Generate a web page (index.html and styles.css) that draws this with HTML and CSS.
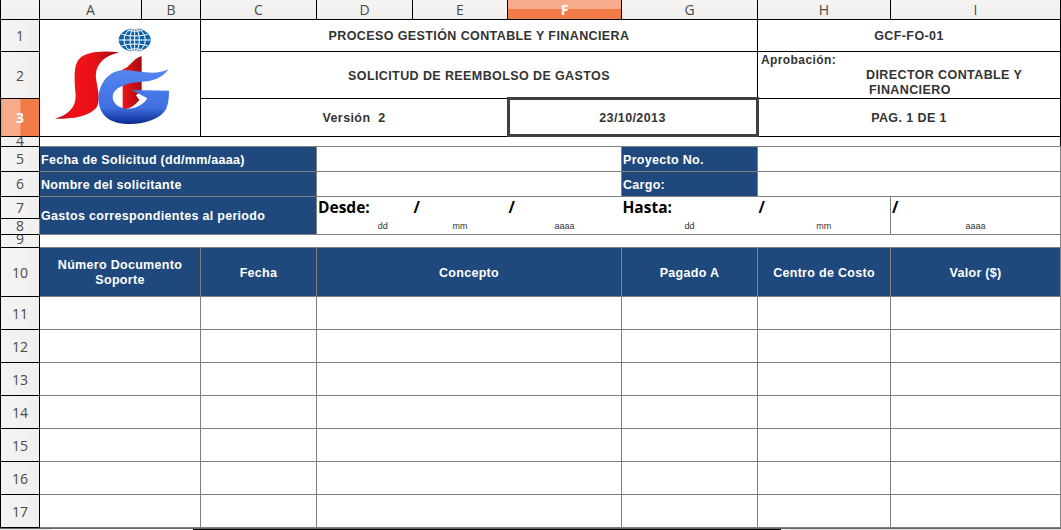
FILE: index.html
```html
<!DOCTYPE html>
<html lang="es">
<head>
    <title>Solicitud de reembolso de gastos</title>
    <link rel="stylesheet" href="styles.css">
</head>
<body>
<table class="sheet">
    <colgroup>
        <col class="c-head"><col class="c-a"><col class="c-b"><col class="c-c"><col class="c-d">
        <col class="c-e"><col class="c-f"><col class="c-g"><col class="c-h"><col class="c-i">
    </colgroup>
    <tr class="r-cols">
        <th class="corner"></th><th>A</th><th>B</th><th>C</th><th>D</th><th>E</th><th class="col-active">F</th><th>G</th><th>H</th><th>I</th>
    </tr>
    <tr class="r1 top">
        <th>1</th>
        <td colspan="2" rowspan="3" class="logo">
            <svg viewBox="0 0 480 345" width="160" height="115">
                <defs>
                    <linearGradient id="red" x1="0" y1="0" x2="1" y2="0">
                        <stop offset="0" stop-color="#b00c10"/>
                        <stop offset="0.3" stop-color="#f01319"/>
                        <stop offset="0.6" stop-color="#e81117"/>
                        <stop offset="1" stop-color="#9a0b0f"/>
                    </linearGradient>
                    <linearGradient id="red-bar" x1="0" y1="0" x2="1" y2="0">
                        <stop offset="0" stop-color="#ee1419"/>
                        <stop offset="1" stop-color="#a50c10"/>
                    </linearGradient>
                    <linearGradient id="blue" x1="0" y1="0" x2="0" y2="1">
                        <stop offset="0" stop-color="#5686ee"/>
                        <stop offset="0.7" stop-color="#3f6fe2"/>
                        <stop offset="1" stop-color="#0b2a8f"/>
                    </linearGradient>
                </defs>
                <path fill="url(#red)" d="M238 97C180 90 125 96 112 125C100 145 104 190 107 225C108 262 85 285 45 296C100 298 155 288 172 258C182 235 172 205 168 175C165 140 185 110 238 97Z"/>
                <path fill="url(#red-bar)" d="M248 148C268 145 275 118 305 108L305 212L288 226L298 240C285 255 270 268 248 268Z"/>
                <path fill="url(#blue)" d="M386 148C345 168 300 152 250 150C208 152 182 185 176 225C172 275 198 306 250 311C305 316 360 300 378 268C386 250 387 230 387 212L275 210L322 235C310 255 285 268 255 266C228 262 212 240 220 220C230 200 265 188 300 186C340 184 365 175 386 148Z"/>
                <ellipse cx="284" cy="60" rx="48" ry="35" fill="#0f63ac"/>
                <g fill="none" stroke="#fff" stroke-width="3">
                    <ellipse cx="284" cy="60" rx="14" ry="35"/>
                    <ellipse cx="284" cy="60" rx="32" ry="35"/>
                    <path d="M284 25V95M237 60H331M244 42C265 50 305 50 324 42M244 78C265 70 305 70 324 78M262 30C275 35 295 35 308 30M262 90C275 85 295 85 308 90"/>
                </g>
            </svg>
        </td>
        <td colspan="5" class="title">PROCESO GESTIÓN CONTABLE Y FINANCIERA</td>
        <td colspan="2" class="title">GCF-FO-01</td>
    </tr>
    <tr class="r2 top">
        <th class="num-low">2</th>
        <td colspan="5" class="title">SOLICITUD DE REEMBOLSO DE GASTOS</td>
        <td colspan="2" class="approval">
            <div class="approval-label">Aprobación:</div>
            <div class="approver">DIRECTOR CONTABLE Y<br><span>FINANCIERO</span></div>
        </td>
    </tr>
    <tr class="r3 top">
        <th class="row-active">3</th>
        <td colspan="3" class="title">Versión&nbsp; 2</td>
        <td colspan="2" class="title selected">23/10/2013<span class="handle"></span></td>
        <td colspan="2" class="title">PAG. 1 DE 1</td>
    </tr>
    <tr class="r4 gap top-end">
        <th>4</th><td colspan="9"></td>
    </tr>
    <tr class="r5">
        <th>5</th>
        <td colspan="3" class="label">Fecha de Solicitud (dd/mm/aaaa)</td>
        <td colspan="3"></td>
        <td class="label">Proyecto No.</td>
        <td colspan="2"></td>
    </tr>
    <tr class="r6">
        <th>6</th>
        <td colspan="3" class="label">Nombre del solicitante</td>
        <td colspan="3"></td>
        <td class="label">Cargo:</td>
        <td colspan="2"></td>
    </tr>
    <tr class="r7">
        <th>7</th>
        <td colspan="3" rowspan="2" class="label">Gastos correspondientes al periodo</td>
        <td class="big open">Desde:</td>
        <td class="big open">/</td>
        <td class="big open">/</td>
        <td class="big open">Hasta:</td>
        <td class="big open-left">/</td>
        <td class="big">/</td>
    </tr>
    <tr class="r8">
        <th>8</th>
        <td class="tiny open first-dd">dd</td>
        <td class="tiny open">mm</td>
        <td class="tiny open">aaaa</td>
        <td class="tiny open">dd</td>
        <td class="tiny open-left">mm</td>
        <td class="tiny">aaaa</td>
    </tr>
    <tr class="r9 gap">
        <th>9</th><td colspan="9"></td>
    </tr>
    <tr class="r10">
        <th class="num-low">10</th>
        <td colspan="2" class="head">Número Documento<br>Soporte</td>
        <td class="head">Fecha</td>
        <td colspan="3" class="head">Concepto</td>
        <td class="head">Pagado A</td>
        <td class="head">Centro de Costo</td>
        <td class="head">Valor ($)</td>
    </tr>
    <tr class="row"><th class="num-low">11</th><td colspan="2"></td><td></td><td colspan="3"></td><td></td><td></td><td></td></tr>
    <tr class="row"><th class="num-low">12</th><td colspan="2"></td><td></td><td colspan="3"></td><td></td><td></td><td></td></tr>
    <tr class="row"><th class="num-low">13</th><td colspan="2"></td><td></td><td colspan="3"></td><td></td><td></td><td></td></tr>
    <tr class="row"><th class="num-low">14</th><td colspan="2"></td><td></td><td colspan="3"></td><td></td><td></td><td></td></tr>
    <tr class="row"><th class="num-low">15</th><td colspan="2"></td><td></td><td colspan="3"></td><td></td><td></td><td></td></tr>
    <tr class="row"><th class="num-low">16</th><td colspan="2"></td><td></td><td colspan="3"></td><td></td><td></td><td></td></tr>
    <tr class="row"><th class="num-low">17</th><td colspan="2"></td><td></td><td colspan="3"></td><td></td><td></td><td></td></tr>
</table>
<div class="tabs">
    <div class="tab-nav"></div>
    <div class="tab-list"></div>
    <div class="tab-rest"></div>
    <div class="tab-scroll"></div>
</div>
</body>
</html>
```
FILE: styles.css
```css
html, body {
    margin: 0;
    height: 530px;
    overflow: hidden;
    background: #f2f1f0;
}
.sheet {
    border-collapse: collapse;
    table-layout: fixed;
    width: 1061px;
    background: white;
    font-family: "Liberation Sans", sans-serif;
    color: #333;
}
.sheet th, .sheet td {
    padding: 0;
    overflow: hidden;
    border: 1px solid #808080;
}

.c-head { width: 39px; }
.c-a { width: 102px; }
.c-b { width: 59px; }
.c-c { width: 116px; }
.c-d { width: 96px; }
.c-e { width: 95px; }
.c-f { width: 114px; }
.c-g { width: 136px; }
.c-h { width: 133px; }
.c-i { width: 170px; }

/* row and column headers */
.sheet th {
    font-family: "Open Sans", sans-serif;
    font-weight: normal;
    font-size: 14px;
    color: #4a4a4a;
    background: linear-gradient(to right, #f5f4f3, #f0efee);
    border-color: #000;
    text-align: center;
    line-height: 1;
    padding-top: 1px;
}
.sheet .num-low { padding-top: 3px; }
.r-cols th {
    background: linear-gradient(#f5f4f3, #efeeed);
    border-top: none;
    padding-top: 2px;
}
.sheet .col-active {
    background: linear-gradient(#f7ab8b 0 50%, #f17c48 50%);
    color: white;
    font-weight: bold;
}
.sheet .row-active {
    background: linear-gradient(to right, #f6ab8b 0 50%, #f17c48 50%);
    color: white;
    font-weight: bold;
}

/* row heights */
.r-cols { height: 19px; }
.r1 { height: 32px; }
.r2 { height: 47px; }
.r3 { height: 38px; }
.r4 { height: 10px; }
.r5 { height: 25px; }
.r6 { height: 25px; }
.r7 { height: 22px; }
.r8 { height: 16px; }
.r9 { height: 13px; }
.r10 { height: 49px; }
.row { height: 33px; }
.sheet .gap th {
    line-height: 8px;
    height: 8px;
    padding-top: 0;
    vertical-align: top;
}
.sheet .r8 th { line-height: 14px; padding-top: 0; }

/* top block has black lines */
.top td, .top-end td { border-color: #000; }
.top-end td { border-bottom-color: #808080; }

.title {
    font-size: 12.5px;
    font-weight: bold;
    text-align: center;
    letter-spacing: 0.4px;
    padding-top: 2px !important;
}
.logo { vertical-align: top; line-height: 0; }
.approval {
    font-size: 12.5px;
    font-weight: bold;
    letter-spacing: 0.4px;
    line-height: 15px;
    padding: 1px 0 0 3px !important;
    vertical-align: top;
}
.approval-label { font-size: 12px; }
.approver { padding-left: 105px; }
.approver span { padding-left: 3px; }

.selected {
    position: relative;
    outline: 3px solid #404040;
    outline-offset: -2px;
}
.handle {
    position: absolute;
    right: -3px;
    bottom: -3px;
    width: 5px;
    height: 5px;
    background: #404040;
}

.label, .head {
    background: #1f497d;
    color: white;
    font-size: 12.5px;
    font-weight: bold;
    letter-spacing: 0.3px;
}
.label { padding: 2px 0 0 1px !important; }
.head { text-align: center; line-height: 15px; padding-top: 3px !important; }

.big {
    font-family: "Open Sans", sans-serif;
    font-size: 15.5px;
    font-weight: bold;
    color: #000;
    padding-left: 1px !important;
    line-height: 20px;
    vertical-align: top;
}
.tiny {
    font-size: 9px;
    text-align: center;
}
.first-dd { padding-left: 36px !important; }

/* period row: only H|I keeps a divider, and 7|8 has no line */
.sheet .big { border-bottom: none; }
.sheet .tiny { border-top: none; }
.sheet .open { border-left: none; border-right: none; }
.sheet .open-left { border-left: none; }

/* top edge of the sheet tab bar, mostly cut off by the window */
.tabs {
    display: flex;
    height: 3px;
    border-top: 1px solid #666;
}
.tab-nav { width: 52px; }
.tab-list { width: 141px; background: white; }
.tab-rest { width: 588px; background: white; border-top: 1px solid #000; }
.tab-scroll { flex: 1; margin-left: 10px; background: #e4e3e2; }
```
